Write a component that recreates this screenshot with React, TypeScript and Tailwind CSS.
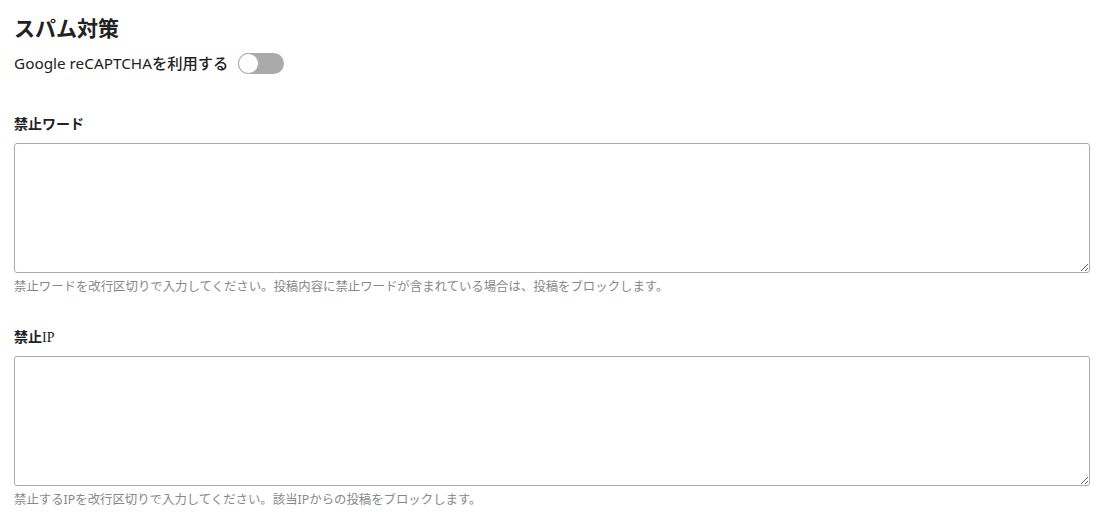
import { useState } from 'react';

const font = { fontFamily: '"Noto Sans", "Noto Sans CJK JP", sans-serif' };

function Toggle() {
  const [on, setOn] = useState(false);
  return (
    <button
      type="button"
      onClick={() => setOn(!on)}
      className={`relative h-[21px] w-[46px] rounded-full ${on ? 'bg-[#4a90e2]' : 'bg-[#aaaaaa]'}`}
    >
      <span
        className={`absolute top-0 h-[21px] w-[21px] rounded-full border border-[#aaaaaa] bg-white ${on ? 'left-[25px]' : 'left-0'}`}
      />
    </button>
  );
}

const Ip = () => (
  <span className="font-normal leading-none" style={{ fontFamily: '"Liberation Serif", serif' }}>
    IP
  </span>
);

function Field({ label, help }: { label: React.ReactNode; help: React.ReactNode }) {
  return (
    <div>
      <div className="h-[20px] text-[14px] font-bold leading-[20px] text-[#222]">{label}</div>
      <textarea className="mt-[9px] block h-[130px] w-full resize-y rounded-[3px] border border-[#aaaaaa] px-2 py-1 text-[14px] outline-none" />
      <p className="mt-[5px] h-[17px] text-[12.4px] leading-[17px] text-[#888]">{help}</p>
    </div>
  );
}

export default function App() {
  return (
    <div className="bg-white px-[14px] pr-[16px] pt-[12px] text-[#222]" style={font}>
      <h2 className="text-[21px] font-bold leading-[32px]">スパム対策</h2>
      <div className="mt-[8px] flex items-center gap-[10px]">
        <span className="text-[15.3px] leading-[22px]">
          Google reCAPTCHA<span className="font-medium">を利用する</span>
        </span>
        <Toggle />
      </div>

      <div className="mt-[40px] space-y-[32px]">
        <Field
          label="禁止ワード"
          help="禁止ワードを改行区切りで入力してください。投稿内容に禁止ワードが含まれている場合は、投稿をブロックします。"
        />
        <Field
          label={<>禁止<Ip /></>}
          help="禁止するIPを改行区切りで入力してください。該当IPからの投稿をブロックします。"
        />
      </div>
    </div>
  );
}
